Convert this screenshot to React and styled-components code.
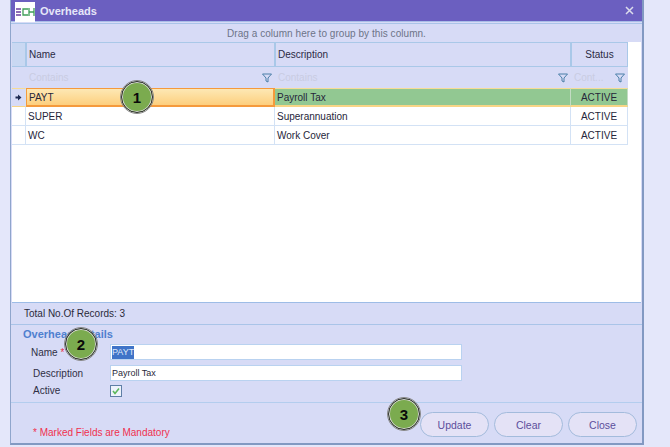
import React from "react";
import styled, { createGlobalStyle } from "styled-components";

const GlobalStyle = createGlobalStyle`
  html, body {
    margin: 0;
    padding: 0;
    background: #e4e7fa;
    overflow: hidden;
  }
  body {
    font-family: "Liberation Sans", Arial, sans-serif;
  }
`;

const Page = styled.div`
  position: relative;
  width: 670px;
  height: 447px;
  padding-left: 10px;
  box-sizing: border-box;
`;

const Window = styled.div`
  width: 634px;
  height: 445px;
  box-sizing: border-box;
  background: #d7dbf6;
  border-left: 1px solid #8fa5cc;
  border-right: 2px solid #8299c2;
  border-bottom: 2px solid #8299c2;
  display: flex;
  flex-direction: column;
`;

const TitleBar = styled.div`
  height: 21px;
  flex: none;
  background: #6b5fc0;
  display: flex;
  align-items: center;
  padding: 0 8px 0 4px;
  border-bottom: 1px solid #a9bde8;
`;

const Logo = styled.div`
  width: 20px;
  height: 20px;
  margin-top: 3px;
  background: #ffffff;
  display: flex;
  align-items: center;
  justify-content: center;
`;

const Title = styled.span`
  margin-left: 5px;
  color: #e6e6f8;
  font-size: 11px;
  font-weight: 700;
`;

const CloseX = styled.svg`
  margin-left: auto;
  width: 9px;
  height: 9px;
`;

const GroupPanel = styled.div`
  height: 18px;
  flex: none;
  margin-top: 1px;
  border-top: 1px solid #a9c4e8;
  background: #d7dbf6;
  display: flex;
  align-items: center;
  justify-content: center;
  color: #6d7488;
  font-size: 10px;
  letter-spacing: 0.05px;
`;

const GridArea = styled.div`
  height: 260px;
  flex: none;
  margin: 0 1px 0 1px;
  background: #ffffff;
  border-bottom: 1px solid #9dbce6;
`;

const Row = styled.div`
  display: grid;
  grid-template-columns: 14px 249px 296px 57px;
  width: 616px;
  height: ${(p) => p.$height}px;
  box-sizing: border-box;
`;

const HeaderCell = styled.div`
  background: ${(p) => (p.$corner ? "#c9d8f2" : "#d7dbf6")};
  border: 1px solid #a9c8e8;
  border-left-width: ${(p) => (p.$corner ? "0" : "1px")};
  box-sizing: border-box;
  display: flex;
  align-items: center;
  justify-content: ${(p) => (p.$center ? "center" : "flex-start")};
  padding-left: ${(p) => (p.$center ? "0" : "2px")};
  color: #2a2a44;
  font-size: 10px;
`;

const FilterCell = styled.div`
  background: #d7dbf6;
  display: flex;
  align-items: center;
  justify-content: space-between;
  padding: 0 3px 0 3px;
  color: #c9cce2;
  font-size: 10px;
  box-sizing: border-box;
`;

const Cell = styled.div`
  box-sizing: border-box;
  display: flex;
  align-items: center;
  justify-content: ${(p) => (p.$center ? "center" : "flex-start")};
  padding-left: ${(p) => (p.$center ? "0" : "2px")};
  font-size: 10px;
  color: #26263a;
  background: ${(p) => (p.$selected ? "#92c892" : "#ffffff")};
  border-right: 1px solid #d3e2f5;
  border-bottom: 1px solid #d3e2f5;
  ${(p) =>
    p.$selected &&
    "border-top: 1px solid #f6dc96; border-bottom: 2px solid #f8d586; border-right: 1px solid #c3dcc3;"}
`;

const ActiveCell = styled(Cell)`
  background: linear-gradient(#fde8b4, #fdcf7e);
  border: 1px solid #f59a3c;
  border-bottom-width: 2px;
  border-right-width: 2px;
`;

const Indicator = styled.div`
  box-sizing: border-box;
  display: flex;
  align-items: center;
  justify-content: center;
  background: ${(p) => (p.$selected ? "#d7dbf6" : "#ffffff")};
  border-right: 1px solid #d3e2f5;
  border-bottom: 1px solid ${(p) => (p.$selected ? "#f8d586" : "#d3e2f5")};
  ${(p) => p.$selected && "border-top: 1px solid #f6dc96;"}
`;

const TotalBar = styled.div`
  height: 21px;
  flex: none;
  display: flex;
  align-items: center;
  padding-left: 13px;
  font-size: 10px;
  color: #2a2a3a;
  border-bottom: 1px solid #a9c4e8;
`;

const Details = styled.div`
  flex: none;
  height: 78px;
  box-sizing: border-box;
  padding-top: 3px;
  border-bottom: 1px solid #b3cdee;
`;

const SectionTitle = styled.div`
  padding-left: 12px;
  height: 13px;
  line-height: 13px;
  color: #4f80cf;
  font-size: 11px;
  font-weight: 700;
`;

const FormRow = styled.div`
  display: grid;
  grid-template-columns: 99px 352px;
  align-items: center;
  height: ${(p) => p.$height}px;
`;

const Label = styled.label`
  padding-left: ${(p) => p.$indent}px;
  font-size: 10px;
  color: #2f2f45;
`;

const Star = styled.span`
  color: #e8304a;
`;

const TextBox = styled.div`
  height: 16px;
  box-sizing: border-box;
  background: #ffffff;
  border: 1px solid #b9d2f0;
  display: flex;
  align-items: center;
  padding-left: 1px;
  font-size: 9px;
  color: #2a2a3a;
`;

const Selected = styled.span`
  background: #3f74c8;
  color: #dfe8fa;
  line-height: 13px;
`;

const CheckBox = styled.div`
  width: 10px;
  height: 10px;
  border: 1px solid #5f7fa6;
  background: #eef3fb;
  display: flex;
  align-items: center;
  justify-content: center;
`;

const Footer = styled.div`
  flex: 1;
  display: flex;
  align-items: flex-start;
  padding-top: 9px;
  position: relative;
`;

const Mandatory = styled.span`
  margin: 15px 0 0 22px;
  color: #f0304e;
  font-size: 10px;
`;

const Buttons = styled.div`
  margin-left: auto;
  margin-right: 5px;
  display: flex;
  gap: 5px;
`;

const Button = styled.button`
  width: 69px;
  height: 25px;
  padding: 0;
  border: 1px solid #a3bbdc;
  border-radius: 13px;
  background: #e4e2f6;
  color: #5c4f9c;
  font-family: inherit;
  font-size: 10.5px;
`;

const Badge = styled.div`
  position: absolute;
  left: ${(p) => p.$x}px;
  top: ${(p) => p.$y}px;
  width: 30px;
  height: 30px;
  border-radius: 50%;
  background: #7bab4f;
  border: 1px solid #2e2e2e;
  outline: 1px solid #8a8a8a;
  box-shadow: inset 0 0 0 1px #d8d8d8;
  display: flex;
  align-items: center;
  justify-content: center;
  color: #0a0a0a;
  font-size: 15px;
  font-weight: 700;
`;

const FunnelIcon = () => (
  <svg width="10" height="10" viewBox="0 0 10 10" fill="none">
    <path
      d="M0.5 1H9.5L6 5V9L4 8V5Z"
      stroke="#4a7fa8"
      strokeWidth="1"
      strokeLinejoin="round"
    />
  </svg>
);

const rows = [
  { name: "SUPER", description: "Superannuation", status: "ACTIVE" },
  { name: "WC", description: "Work Cover", status: "ACTIVE" },
];

export default function App() {
  return (
    <>
      <GlobalStyle />
      <Page>
        <Window>
          <TitleBar>
            <Logo>
              <svg width="20" height="8" viewBox="0 0 20 8">
                <path d="M1 1H6M1 4H6M1 7H6" stroke="#6b3f9e" strokeWidth="1.3" />
                <path d="M13 1H8V7H13" fill="none" stroke="#3f9e58" strokeWidth="1.3" />
                <path d="M14 0V8M19 0V8M14 4H19" stroke="#3f9e58" strokeWidth="1.3" />
              </svg>
            </Logo>
            <Title>Overheads</Title>
            <CloseX viewBox="0 0 9 9">
              <path d="M1 1L8 8M8 1L1 8" stroke="#dcdcec" strokeWidth="1.5" />
            </CloseX>
          </TitleBar>
          <GroupPanel>Drag a column here to group by this column.</GroupPanel>
          <GridArea>
            <Row $height={25}>
              <HeaderCell $corner />
              <HeaderCell>Name</HeaderCell>
              <HeaderCell>Description</HeaderCell>
              <HeaderCell $center>Status</HeaderCell>
            </Row>
            <Row $height={21}>
              <FilterCell />
              <FilterCell>
                Contains
                <FunnelIcon />
              </FilterCell>
              <FilterCell>
                Contains
                <FunnelIcon />
              </FilterCell>
              <FilterCell>
                Cont...
                <FunnelIcon />
              </FilterCell>
            </Row>
            <Row $height={19}>
              <Indicator $selected>
                <svg width="7" height="7" viewBox="0 0 7 7">
                  <path d="M3 0.5L6.5 3.5L3 6.5V4.5H0.5V2.5H3Z" fill="#1f2a50" />
                </svg>
              </Indicator>
              <ActiveCell>PAYT</ActiveCell>
              <Cell $selected>Payroll Tax</Cell>
              <Cell $selected $center>
                ACTIVE
              </Cell>
            </Row>
            {rows.map((row) => (
              <Row $height={19} key={row.name}>
                <Indicator />
                <Cell>{row.name}</Cell>
                <Cell>{row.description}</Cell>
                <Cell $center>{row.status}</Cell>
              </Row>
            ))}
          </GridArea>
          <TotalBar>Total No.Of Records: 3</TotalBar>
          <Details>
            <SectionTitle>Overhead Details</SectionTitle>
            <FormRow $height={22}>
              <Label $indent={20}>
                Name <Star>*</Star>
              </Label>
              <TextBox>
                <Selected>PAYT</Selected>
              </TextBox>
            </FormRow>
            <FormRow $height={20}>
              <Label $indent={22}>Description</Label>
              <TextBox>Payroll Tax</TextBox>
            </FormRow>
            <FormRow $height={15}>
              <Label $indent={22}>Active</Label>
              <CheckBox>
                <svg width="8" height="8" viewBox="0 0 8 8" fill="none">
                  <path d="M1 4L3 6.5L7 1.5" stroke="#5cb85c" strokeWidth="1.6" />
                </svg>
              </CheckBox>
            </FormRow>
          </Details>
          <Footer>
            <Mandatory>* Marked Fields are Mandatory</Mandatory>
            <Buttons>
              <Button>Update</Button>
              <Button>Clear</Button>
              <Button>Close</Button>
            </Buttons>
          </Footer>
        </Window>
        <Badge $x={121} $y={81}>1</Badge>
        <Badge $x={65} $y={328}>2</Badge>
        <Badge $x={388} $y={398}>3</Badge>
      </Page>
    </>
  );
}
